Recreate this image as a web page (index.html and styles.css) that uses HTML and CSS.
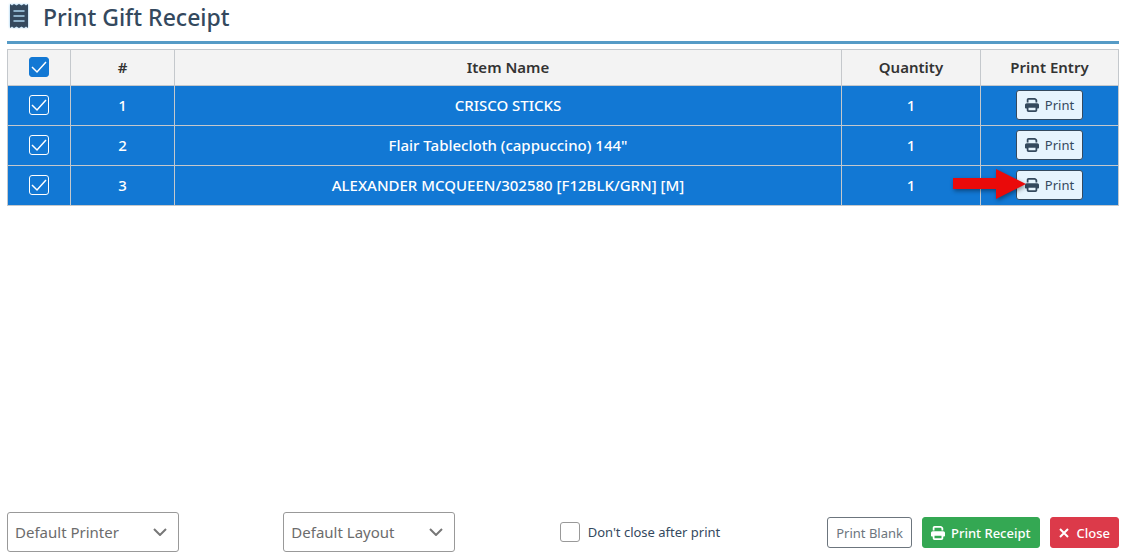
FILE: index.html
```html
<!DOCTYPE html>
<html lang="en">
<head>
    <meta charset="utf-8">
    <title>Print Gift Receipt</title>
    <link rel="stylesheet" href="styles.css">
</head>
<body>
<svg class="sprite" aria-hidden="true">
    <symbol id="icon-print" viewBox="0 0 512 512">
        <path fill="currentColor" d="M128 0C92.7 0 64 28.7 64 64v96h64V64H354.7L384 93.3V160h64V93.3c0-17-6.7-33.3-18.7-45.3L400 18.7C388 6.7 371.7 0 354.7 0H128zM384 352v32 64H128V384 368 352H384zm64 32h32c17.7 0 32-14.3 32-32V256c0-35.3-28.7-64-64-64H64c-35.3 0-64 28.7-64 64v96c0 17.7 14.3 32 32 32H64v64c0 35.3 28.7 64 64 64H384c35.3 0 64-28.7 64-64V384z"/>
    </symbol>
</svg>
<div class="page">
    <header class="page-header">
        <svg class="icon-receipt" viewBox="0 0 20 26" aria-hidden="true">
            <path fill="#34495e" d="M1 1l2 1.500L5 1l2.500 1.500L10 1l2.500 1.500L15 1l2 1.500L19 1v24l-2-1.500L15 25l-2.500-1.500L10 25l-2.500-1.500L5 25l-2-1.500L1 25z"/>
            <path stroke="#a9d3ee" stroke-width="1.500" stroke-linecap="round" d="M5 8h10M5 13h10M5 18h10"/>
        </svg>
        <h1 class="page-title">Print Gift Receipt</h1>
    </header>

    <table class="items">
        <colgroup>
            <col class="col-check">
            <col class="col-num">
            <col class="col-name">
            <col class="col-qty">
            <col class="col-print">
        </colgroup>
        <thead>
            <tr>
                <th><input class="check check-all" type="checkbox" aria-label="Select all" checked></th>
                <th>#</th>
                <th>Item Name</th>
                <th>Quantity</th>
                <th>Print Entry</th>
            </tr>
        </thead>
        <tbody>
            <tr>
                <td><input class="check" type="checkbox" aria-label="Select item 1" checked></td>
                <td>1</td>
                <td>CRISCO STICKS</td>
                <td>1</td>
                <td>
                    <div class="entry">
                        <button class="btn btn-entry" type="button"><svg class="icon" aria-hidden="true"><use href="#icon-print"/></svg>Print</button>
                    </div>
                </td>
            </tr>
            <tr>
                <td><input class="check" type="checkbox" aria-label="Select item 2" checked></td>
                <td>2</td>
                <td>Flair Tablecloth (cappuccino) 144"</td>
                <td>1</td>
                <td>
                    <div class="entry">
                        <button class="btn btn-entry" type="button"><svg class="icon" aria-hidden="true"><use href="#icon-print"/></svg>Print</button>
                    </div>
                </td>
            </tr>
            <tr>
                <td><input class="check" type="checkbox" aria-label="Select item 3" checked></td>
                <td>3</td>
                <td>ALEXANDER MCQUEEN/302580 [F12BLK/GRN] [M]</td>
                <td>1</td>
                <td>
                    <div class="entry">
                        <button class="btn btn-entry" type="button"><svg class="icon" aria-hidden="true"><use href="#icon-print"/></svg>Print</button>
                        <svg class="arrow" viewBox="0 0 73 30" aria-hidden="true">
                            <path fill="#ea0a0a" d="M0 9h43V0l30 15-30 15V20H0z"/>
                        </svg>
                    </div>
                </td>
            </tr>
        </tbody>
    </table>

    <footer class="toolbar">
        <div class="select-box">
            <select class="select" aria-label="Printer"><option>Default Printer</option></select>
            <svg class="chevron" viewBox="0 0 14 8" aria-hidden="true"><path d="M1 1l6 6 6-6"/></svg>
        </div>
        <div class="select-box">
            <select class="select" aria-label="Layout"><option>Default Layout</option></select>
            <svg class="chevron" viewBox="0 0 14 8" aria-hidden="true"><path d="M1 1l6 6 6-6"/></svg>
        </div>
        <label class="keep-open"><input class="check check-plain" type="checkbox">Don't close after print</label>
        <div class="actions">
            <button class="btn btn-blank" type="button">Print Blank</button>
            <button class="btn btn-receipt" type="button"><svg class="icon" aria-hidden="true"><use href="#icon-print"/></svg>Print Receipt</button>
            <button class="btn btn-close" type="button"><svg class="icon-x" viewBox="0 0 10 10" aria-hidden="true"><path d="M1 1l8 8M9 1l-8 8"/></svg>Close</button>
        </div>
    </footer>
</div>
</body>
</html>
```
FILE: styles.css
```css
*{
    box-sizing: border-box;
}
body{
    margin: 0;
    background: #fff;
    color: #34495e;
    font-family: "Noto Sans", "Open Sans", sans-serif;
    font-size: 15px;
}
.sprite{
    display: none;
}
.page{
    display: flex;
    flex-direction: column;
    min-height: 100vh;
    padding: 0 12px 5px 7px;
}

/* title */
.page-header{
    display: flex;
    align-items: flex-start;
    gap: 14px;
    height: 44px;
    padding: 3px 0 0 2px;
    border-bottom: 3px solid #569bc6;
    margin-bottom: 5px;
}
.icon-receipt{
    width: 20px;
    height: 26px;
    filter: drop-shadow(0 0 1px #7fc0ee);
}
.page-title{
    margin: 0;
    font-size: 23px;
    line-height: 28px;
    font-weight: 500;
}

/* items table */
.items{
    width: 100%;
    border-collapse: collapse;
    table-layout: fixed;
    text-align: center;
}
.col-check{
    width: 63px;
}
.col-num{
    width: 104px;
}
.col-qty{
    width: 139px;
}
.col-print{
    width: 138px;
}
.items th,
.items td{
    padding: 0 0 2px;
    border: 1px solid #c4c8cc;
}
.items th{
    height: 36px;
    background: #f3f3f3;
    color: #333;
    font-weight: 600;
}
.items td{
    height: 40px;
    background: #1278d4;
    color: #fff;
    font-weight: 500;
}
.entry{
    display: inline-block;
    position: relative;
    vertical-align: middle;
}
.arrow{
    position: absolute;
    top: -1px;
    right: calc(100% - 10px);
    width: 73px;
    height: 30px;
    filter: drop-shadow(1px 2px 2px rgba(0, 0, 0, .4));
}

/* tick boxes */
.check{
    appearance: none;
    display: inline-block;
    width: 20px;
    height: 20px;
    margin: 0;
    border: 1px solid #fff;
    border-radius: 3px;
    vertical-align: middle;
}
.check:checked{
    background: #1278d4 url("data:image/svg+xml,%3Csvg xmlns='http://www.w3.org/2000/svg' viewBox='0 0 18 18'%3E%3Cpath d='M2 9l5 5 9-10' fill='none' stroke='white' stroke-width='1.500'/%3E%3C/svg%3E") center / 18px 18px no-repeat;
}
.check-all{
    border-color: #1278d4;
}
.check-plain{
    border-color: #999;
}

/* buttons */
.btn{
    display: flex;
    align-items: center;
    height: 31px;
    padding: 0 8px;
    border: 1px solid;
    border-radius: 3px;
    font-family: inherit;
    font-size: 13px;
    white-space: nowrap;
}
.btn-entry{
    height: 30px;
    gap: 6px;
    border-color: #34495e;
    background: #e6f4fe;
    color: #34495e;
}
.btn-blank{
    border-color: #6c757d;
    background: #fff;
    color: #6c757d;
}
.btn-receipt{
    gap: 6px;
    border-color: #34a853;
    background: #34a853;
    color: #fff;
    font-weight: 500;
}
.btn-close{
    gap: 8px;
    border-color: #dc3a4a;
    background: #dc3a4a;
    color: #fff;
    font-weight: 500;
}
.icon{
    width: 14px;
    height: 14px;
}
.icon-x{
    width: 10px;
    height: 10px;
    fill: none;
    stroke: currentColor;
    stroke-width: 2;
}

/* bottom bar */
.toolbar{
    display: grid;
    grid-template-columns: repeat(3, 1fr) 283px;
    align-items: center;
    margin-top: auto;
}
.select-box{
    position: relative;
    width: 172px;
}
.select{
    appearance: none;
    width: 100%;
    height: 40px;
    padding: 0 32px 0 7px;
    border: 1px solid #999;
    border-radius: 3px;
    background: #fff;
    color: #6c6c6c;
    font-family: inherit;
    font-size: 15px;
}
.chevron{
    position: absolute;
    top: 16px;
    right: 12px;
    width: 14px;
    height: 8px;
    fill: none;
    stroke: #777;
    stroke-width: 2;
    pointer-events: none;
}
.keep-open{
    display: flex;
    align-items: center;
    gap: 8px;
    font-size: 13px;
}
.actions{
    display: flex;
    justify-content: flex-end;
    gap: 10px;
    padding-top: 1px;
}
```
